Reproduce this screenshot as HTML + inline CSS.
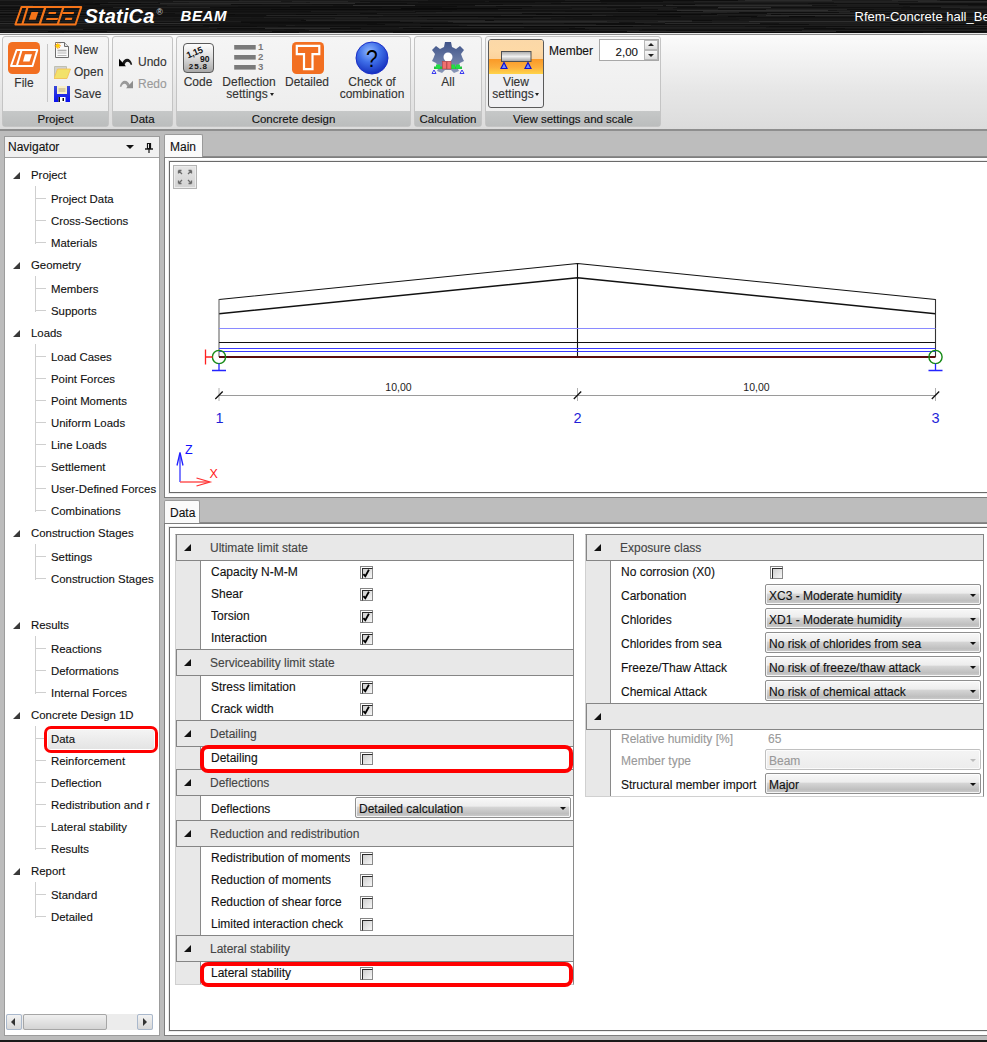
<!DOCTYPE html>
<html><head><meta charset="utf-8">
<style>
*{margin:0;padding:0;box-sizing:border-box}
html,body{width:987px;height:1042px;overflow:hidden;background:#bcbcbc;font-family:"Liberation Sans",sans-serif;font-size:11px;color:#111}
.ni,.row,.ct,.combo,.tab,.t,.lbl,.gfoot{-webkit-text-stroke:0.12px currentColor}
.a{position:absolute}
.t{position:absolute;white-space:nowrap;line-height:14px}
#title{left:0;top:0;width:987px;height:34px;background:#0b0b0b}
#ribbon{left:0;top:34px;width:987px;height:97px;background:linear-gradient(#fbfbfb,#e6e6e6 60%,#dcdcdc);border-top:1px solid #9a9a9a;border-bottom:2px solid #8e8e8e}
.grp{position:absolute;top:36px;height:91px;border:1px solid #c4c4c4;border-radius:3px;background:linear-gradient(#f5f5f5,#ececec)}
.gfoot{position:absolute;left:0;right:0;bottom:0;height:15px;background:linear-gradient(#c6c8c8,#bbbdbd);text-align:center;line-height:16px;font-size:11.5px;color:#111}
.lbl{position:absolute;text-align:center;white-space:nowrap;line-height:15px;color:#333;font-size:11.5px}
#nav{left:4px;top:136px;width:156px;height:900px;background:#fff;border:1px solid #9c9c9c}
#navh{left:0;top:0;width:154px;height:21px;background:#f0f0f0;border-bottom:1px solid #a0a0a0}
.ni{position:absolute;white-space:nowrap;font-size:11.4px;line-height:14px;color:#111}
.panel{position:absolute;background:#fff;border:1px solid #7e7e7e}
.frame{position:absolute;border:1px solid #6a6a6a;background:#fff;border-right:none;box-shadow:0 0 0 1px #ececec}
.tab{position:absolute;background:#fafafa;border:1px solid #9a9a9a;border-bottom:none;border-radius:2px 2px 0 0;font-size:11.5px;line-height:20px;padding-left:5px}
.tabstrip{position:absolute;background:#bdbdbd;border-bottom:1px solid #8a8a8a}
.pg{position:absolute;border:1px solid;border-color:#8a8a8a #8a8a8a #d0d0d0 #d0d0d0;background:#fff}
.cat{position:absolute;height:27px;background:#e8e8e8;border:1px solid #858585}
.cat .tri{position:absolute;left:7px;top:9px;width:0;height:0;border-left:7px solid transparent;border-bottom:7px solid #111}
.cat .ct{position:absolute;left:33px;top:6px;color:#444;font-size:12px;line-height:14px;white-space:nowrap}
.gut{position:absolute;left:0;width:24px;background:#e8e8e8;border-right:1px solid #8a8a8a;border-left:1px solid #d0d0d0}
.row{position:absolute;left:35px;white-space:nowrap;font-size:12px;line-height:14px;overflow:hidden;width:139px}
.cb{position:absolute;width:13px;height:13px;border:1px solid #858585;background:#fff}
.cb::after{content:"";position:absolute;left:1px;top:1px;width:9px;height:9px;border:1px solid;border-color:#2a2a2a #8a8a8a #8a8a8a #2a2a2a;background:linear-gradient(135deg,#cfcfcf,#f6f6f6)}
.combo{position:absolute;height:21px;border:1px solid #8f8f8f;border-radius:2px;background:linear-gradient(#f8f8f8,#ededed 42%,#d4d4d4 50%,#bfbfbf 82%,#c6c6c6 92%,#e2e2e2);box-shadow:inset 0 0 0 1px rgba(255,255,255,0.75);font-size:12px;line-height:23px;padding-left:3px;white-space:nowrap;overflow:hidden}
.combo::after{content:"";position:absolute;right:4px;top:9px;border-left:3px solid transparent;border-right:3px solid transparent;border-top:3px solid #111}
.hl{position:absolute;border:3px solid #ff0000;border-radius:7px}
.ntri{left:13px;width:0;height:0;border-left:7px solid transparent;border-bottom:7px solid #3a3a3a}
.dis{color:#999;background:linear-gradient(#f4f4f4,#ececec)!important;border-color:#c0c0c0!important}
.dis::after{border-top-color:#bbb!important}
.dtxt{color:#9a9a9a}
</style></head><body>

<!-- TITLE BAR -->
<div id="title" class="a"></div>

<!-- RIBBON -->
<div id="ribbon" class="a"></div>

<div class="grp" style="left:2px;width:107px"><div class="gfoot">Project</div></div>
<div class="grp" style="left:112px;width:61px"><div class="gfoot">Data</div></div>
<div class="grp" style="left:176px;width:235px"><div class="gfoot">Concrete design</div></div>
<div class="grp" style="left:414px;width:68px"><div class="gfoot">Calculation</div></div>
<div class="grp" style="left:485px;width:176px"><div class="gfoot">View settings and scale</div></div>
<!-- title content -->
<svg class="a" style="left:0;top:0" width="987" height="33">
  <defs>
    <g id="streakg"></g>
  </defs>
  <rect width="987" height="33" fill="#111"/>
<rect y="0" width="987" height="1" fill="rgb(28,28,28)"/>
<rect x="0" y="0" width="68" height="1" fill="rgb(33,33,33)" opacity="0.69"/>
<rect x="72" y="0" width="167" height="1" fill="rgb(14,14,14)" opacity="0.52"/>
<rect x="242" y="0" width="159" height="1" fill="rgb(21,21,21)" opacity="0.32"/>
<rect x="428" y="0" width="137" height="1" fill="rgb(12,12,12)" opacity="0.44"/>
<rect x="600" y="0" width="138" height="1" fill="rgb(11,11,11)" opacity="0.80"/>
<rect x="745" y="0" width="87" height="1" fill="rgb(48,48,48)" opacity="0.68"/>
<rect x="892" y="0" width="45" height="1" fill="rgb(44,44,44)" opacity="0.65"/>
<rect x="940" y="0" width="86" height="1" fill="rgb(10,10,10)" opacity="0.63"/>
<rect y="1" width="987" height="1" fill="rgb(24,24,24)"/>
<rect x="0" y="1" width="137" height="1" fill="rgb(17,17,17)" opacity="0.62"/>
<rect x="173" y="1" width="108" height="1" fill="rgb(43,43,43)" opacity="0.79"/>
<rect x="292" y="1" width="56" height="1" fill="rgb(45,45,45)" opacity="0.64"/>
<rect x="360" y="1" width="125" height="1" fill="rgb(14,14,14)" opacity="0.63"/>
<rect x="489" y="1" width="174" height="1" fill="rgb(11,11,11)" opacity="0.67"/>
<rect x="694" y="1" width="204" height="1" fill="rgb(42,42,42)" opacity="0.56"/>
<rect x="918" y="1" width="149" height="1" fill="rgb(45,45,45)" opacity="0.85"/>
<rect y="2" width="987" height="1" fill="rgb(24,24,24)"/>
<rect x="0" y="2" width="93" height="1" fill="rgb(19,19,19)" opacity="0.72"/>
<rect x="108" y="2" width="50" height="1" fill="rgb(44,44,44)" opacity="0.48"/>
<rect x="189" y="2" width="117" height="1" fill="rgb(36,36,36)" opacity="0.47"/>
<rect x="310" y="2" width="60" height="1" fill="rgb(40,40,40)" opacity="0.55"/>
<rect x="418" y="2" width="117" height="1" fill="rgb(17,17,17)" opacity="0.86"/>
<rect x="561" y="2" width="40" height="1" fill="rgb(50,50,50)" opacity="0.35"/>
<rect x="636" y="2" width="176" height="1" fill="rgb(28,28,28)" opacity="0.50"/>
<rect x="834" y="2" width="182" height="1" fill="rgb(39,39,39)" opacity="0.65"/>
<rect y="3" width="987" height="1" fill="rgb(16,16,16)"/>
<rect x="0" y="3" width="53" height="1" fill="rgb(25,25,25)" opacity="0.58"/>
<rect x="95" y="3" width="46" height="1" fill="rgb(11,11,11)" opacity="0.74"/>
<rect x="160" y="3" width="195" height="1" fill="rgb(44,44,44)" opacity="0.90"/>
<rect x="407" y="3" width="144" height="1" fill="rgb(26,26,26)" opacity="0.73"/>
<rect x="607" y="3" width="201" height="1" fill="rgb(30,30,30)" opacity="0.31"/>
<rect x="837" y="3" width="120" height="1" fill="rgb(18,18,18)" opacity="0.67"/>
<rect y="4" width="987" height="1" fill="rgb(14,14,14)"/>
<rect x="0" y="4" width="85" height="1" fill="rgb(26,26,26)" opacity="0.38"/>
<rect x="100" y="4" width="131" height="1" fill="rgb(33,33,33)" opacity="0.85"/>
<rect x="262" y="4" width="50" height="1" fill="rgb(18,18,18)" opacity="0.57"/>
<rect x="347" y="4" width="101" height="1" fill="rgb(16,16,16)" opacity="0.79"/>
<rect x="503" y="4" width="170" height="1" fill="rgb(25,25,25)" opacity="0.72"/>
<rect x="695" y="4" width="204" height="1" fill="rgb(32,32,32)" opacity="0.87"/>
<rect x="908" y="4" width="51" height="1" fill="rgb(19,19,19)" opacity="0.39"/>
<rect y="5" width="987" height="1" fill="rgb(20,20,20)"/>
<rect x="0" y="5" width="33" height="1" fill="rgb(39,39,39)" opacity="0.80"/>
<rect x="44" y="5" width="97" height="1" fill="rgb(26,26,26)" opacity="0.30"/>
<rect x="167" y="5" width="166" height="1" fill="rgb(31,31,31)" opacity="0.67"/>
<rect x="353" y="5" width="62" height="1" fill="rgb(52,52,52)" opacity="0.82"/>
<rect x="475" y="5" width="188" height="1" fill="rgb(49,49,49)" opacity="0.71"/>
<rect x="666" y="5" width="146" height="1" fill="rgb(51,51,51)" opacity="0.78"/>
<rect x="837" y="5" width="131" height="1" fill="rgb(33,33,33)" opacity="0.54"/>
<rect y="6" width="987" height="1" fill="rgb(22,22,22)"/>
<rect x="0" y="6" width="45" height="1" fill="rgb(20,20,20)" opacity="0.34"/>
<rect x="58" y="6" width="142" height="1" fill="rgb(18,18,18)" opacity="0.37"/>
<rect x="238" y="6" width="43" height="1" fill="rgb(14,14,14)" opacity="0.30"/>
<rect x="290" y="6" width="167" height="1" fill="rgb(14,14,14)" opacity="0.87"/>
<rect x="496" y="6" width="36" height="1" fill="rgb(12,12,12)" opacity="0.82"/>
<rect x="571" y="6" width="126" height="1" fill="rgb(17,17,17)" opacity="0.68"/>
<rect x="719" y="6" width="184" height="1" fill="rgb(31,31,31)" opacity="0.58"/>
<rect x="910" y="6" width="154" height="1" fill="rgb(37,37,37)" opacity="0.59"/>
<rect y="7" width="987" height="1" fill="rgb(16,16,16)"/>
<rect x="0" y="7" width="66" height="1" fill="rgb(14,14,14)" opacity="0.75"/>
<rect x="113" y="7" width="97" height="1" fill="rgb(38,38,38)" opacity="0.80"/>
<rect x="220" y="7" width="162" height="1" fill="rgb(9,9,9)" opacity="0.42"/>
<rect x="442" y="7" width="165" height="1" fill="rgb(31,31,31)" opacity="0.39"/>
<rect x="641" y="7" width="36" height="1" fill="rgb(41,41,41)" opacity="0.48"/>
<rect x="718" y="7" width="53" height="1" fill="rgb(52,52,52)" opacity="0.81"/>
<rect x="804" y="7" width="123" height="1" fill="rgb(18,18,18)" opacity="0.51"/>
<rect x="941" y="7" width="166" height="1" fill="rgb(42,42,42)" opacity="0.77"/>
<rect y="8" width="987" height="1" fill="rgb(20,20,20)"/>
<rect x="0" y="8" width="186" height="1" fill="rgb(20,20,20)" opacity="0.78"/>
<rect x="238" y="8" width="132" height="1" fill="rgb(22,22,22)" opacity="0.42"/>
<rect x="401" y="8" width="121" height="1" fill="rgb(9,9,9)" opacity="0.89"/>
<rect x="572" y="8" width="101" height="1" fill="rgb(38,38,38)" opacity="0.46"/>
<rect x="717" y="8" width="184" height="1" fill="rgb(30,30,30)" opacity="0.57"/>
<rect x="960" y="8" width="215" height="1" fill="rgb(30,30,30)" opacity="0.87"/>
<rect y="9" width="987" height="1" fill="rgb(16,16,16)"/>
<rect x="0" y="9" width="86" height="1" fill="rgb(14,14,14)" opacity="0.44"/>
<rect x="98" y="9" width="116" height="1" fill="rgb(21,21,21)" opacity="0.59"/>
<rect x="271" y="9" width="186" height="1" fill="rgb(8,8,8)" opacity="0.59"/>
<rect x="498" y="9" width="118" height="1" fill="rgb(49,49,49)" opacity="0.35"/>
<rect x="658" y="9" width="60" height="1" fill="rgb(32,32,32)" opacity="0.77"/>
<rect x="766" y="9" width="81" height="1" fill="rgb(38,38,38)" opacity="0.83"/>
<rect x="874" y="9" width="192" height="1" fill="rgb(29,29,29)" opacity="0.35"/>
<rect y="10" width="987" height="1" fill="rgb(22,22,22)"/>
<rect x="0" y="10" width="148" height="1" fill="rgb(33,33,33)" opacity="0.75"/>
<rect x="153" y="10" width="215" height="1" fill="rgb(18,18,18)" opacity="0.40"/>
<rect x="376" y="10" width="37" height="1" fill="rgb(17,17,17)" opacity="0.65"/>
<rect x="442" y="10" width="197" height="1" fill="rgb(17,17,17)" opacity="0.67"/>
<rect x="677" y="10" width="151" height="1" fill="rgb(50,50,50)" opacity="0.86"/>
<rect x="837" y="10" width="170" height="1" fill="rgb(43,43,43)" opacity="0.38"/>
<rect y="11" width="987" height="1" fill="rgb(16,16,16)"/>
<rect x="0" y="11" width="164" height="1" fill="rgb(16,16,16)" opacity="0.56"/>
<rect x="219" y="11" width="79" height="1" fill="rgb(21,21,21)" opacity="0.32"/>
<rect x="311" y="11" width="104" height="1" fill="rgb(40,40,40)" opacity="0.44"/>
<rect x="452" y="11" width="113" height="1" fill="rgb(24,24,24)" opacity="0.63"/>
<rect x="618" y="11" width="63" height="1" fill="rgb(11,11,11)" opacity="0.85"/>
<rect x="703" y="11" width="147" height="1" fill="rgb(50,50,50)" opacity="0.65"/>
<rect x="907" y="11" width="162" height="1" fill="rgb(34,34,34)" opacity="0.80"/>
<rect y="12" width="987" height="1" fill="rgb(30,30,30)"/>
<rect x="0" y="12" width="63" height="1" fill="rgb(42,42,42)" opacity="0.39"/>
<rect x="95" y="12" width="34" height="1" fill="rgb(36,36,36)" opacity="0.77"/>
<rect x="167" y="12" width="31" height="1" fill="rgb(17,17,17)" opacity="0.40"/>
<rect x="228" y="12" width="188" height="1" fill="rgb(15,15,15)" opacity="0.63"/>
<rect x="436" y="12" width="204" height="1" fill="rgb(41,41,41)" opacity="0.62"/>
<rect x="670" y="12" width="57" height="1" fill="rgb(43,43,43)" opacity="0.33"/>
<rect x="739" y="12" width="100" height="1" fill="rgb(10,10,10)" opacity="0.76"/>
<rect x="871" y="12" width="145" height="1" fill="rgb(43,43,43)" opacity="0.32"/>
<rect y="13" width="987" height="1" fill="rgb(16,16,16)"/>
<rect x="0" y="13" width="143" height="1" fill="rgb(28,28,28)" opacity="0.67"/>
<rect x="175" y="13" width="185" height="1" fill="rgb(40,40,40)" opacity="0.42"/>
<rect x="377" y="13" width="145" height="1" fill="rgb(40,40,40)" opacity="0.62"/>
<rect x="552" y="13" width="159" height="1" fill="rgb(23,23,23)" opacity="0.72"/>
<rect x="767" y="13" width="96" height="1" fill="rgb(43,43,43)" opacity="0.84"/>
<rect x="875" y="13" width="144" height="1" fill="rgb(16,16,16)" opacity="0.55"/>
<rect y="14" width="987" height="1" fill="rgb(12,12,12)"/>
<rect x="0" y="14" width="110" height="1" fill="rgb(12,12,12)" opacity="0.70"/>
<rect x="137" y="14" width="48" height="1" fill="rgb(21,21,21)" opacity="0.70"/>
<rect x="235" y="14" width="61" height="1" fill="rgb(17,17,17)" opacity="0.86"/>
<rect x="337" y="14" width="199" height="1" fill="rgb(31,31,31)" opacity="0.39"/>
<rect x="592" y="14" width="65" height="1" fill="rgb(37,37,37)" opacity="0.43"/>
<rect x="717" y="14" width="54" height="1" fill="rgb(33,33,33)" opacity="0.83"/>
<rect x="781" y="14" width="200" height="1" fill="rgb(22,22,22)" opacity="0.40"/>
<rect y="15" width="987" height="1" fill="rgb(30,30,30)"/>
<rect x="0" y="15" width="133" height="1" fill="rgb(29,29,29)" opacity="0.55"/>
<rect x="155" y="15" width="111" height="1" fill="rgb(13,13,13)" opacity="0.73"/>
<rect x="267" y="15" width="116" height="1" fill="rgb(43,43,43)" opacity="0.58"/>
<rect x="428" y="15" width="34" height="1" fill="rgb(32,32,32)" opacity="0.50"/>
<rect x="501" y="15" width="105" height="1" fill="rgb(40,40,40)" opacity="0.88"/>
<rect x="613" y="15" width="88" height="1" fill="rgb(14,14,14)" opacity="0.35"/>
<rect x="718" y="15" width="40" height="1" fill="rgb(19,19,19)" opacity="0.46"/>
<rect x="766" y="15" width="138" height="1" fill="rgb(51,51,51)" opacity="0.79"/>
<rect x="920" y="15" width="133" height="1" fill="rgb(17,17,17)" opacity="0.62"/>
<rect y="16" width="987" height="1" fill="rgb(12,12,12)"/>
<rect x="0" y="16" width="209" height="1" fill="rgb(28,28,28)" opacity="0.35"/>
<rect x="212" y="16" width="206" height="1" fill="rgb(19,19,19)" opacity="0.56"/>
<rect x="422" y="16" width="98" height="1" fill="rgb(9,9,9)" opacity="0.68"/>
<rect x="571" y="16" width="96" height="1" fill="rgb(13,13,13)" opacity="0.66"/>
<rect x="681" y="16" width="47" height="1" fill="rgb(24,24,24)" opacity="0.82"/>
<rect x="757" y="16" width="32" height="1" fill="rgb(29,29,29)" opacity="0.90"/>
<rect x="815" y="16" width="98" height="1" fill="rgb(47,47,47)" opacity="0.38"/>
<rect x="946" y="16" width="211" height="1" fill="rgb(23,23,23)" opacity="0.86"/>
<rect y="17" width="987" height="1" fill="rgb(24,24,24)"/>
<rect x="0" y="17" width="42" height="1" fill="rgb(19,19,19)" opacity="0.42"/>
<rect x="61" y="17" width="190" height="1" fill="rgb(27,27,27)" opacity="0.62"/>
<rect x="264" y="17" width="104" height="1" fill="rgb(36,36,36)" opacity="0.60"/>
<rect x="379" y="17" width="99" height="1" fill="rgb(30,30,30)" opacity="0.78"/>
<rect x="494" y="17" width="39" height="1" fill="rgb(8,8,8)" opacity="0.31"/>
<rect x="565" y="17" width="171" height="1" fill="rgb(20,20,20)" opacity="0.61"/>
<rect x="751" y="17" width="144" height="1" fill="rgb(14,14,14)" opacity="0.69"/>
<rect x="936" y="17" width="140" height="1" fill="rgb(50,50,50)" opacity="0.60"/>
<rect y="18" width="987" height="1" fill="rgb(22,22,22)"/>
<rect x="0" y="18" width="159" height="1" fill="rgb(27,27,27)" opacity="0.71"/>
<rect x="173" y="18" width="117" height="1" fill="rgb(20,20,20)" opacity="0.80"/>
<rect x="335" y="18" width="216" height="1" fill="rgb(48,48,48)" opacity="0.38"/>
<rect x="573" y="18" width="43" height="1" fill="rgb(16,16,16)" opacity="0.31"/>
<rect x="656" y="18" width="219" height="1" fill="rgb(24,24,24)" opacity="0.56"/>
<rect x="878" y="18" width="51" height="1" fill="rgb(50,50,50)" opacity="0.80"/>
<rect x="984" y="18" width="159" height="1" fill="rgb(50,50,50)" opacity="0.88"/>
<rect y="19" width="987" height="1" fill="rgb(20,20,20)"/>
<rect x="0" y="19" width="207" height="1" fill="rgb(26,26,26)" opacity="0.33"/>
<rect x="218" y="19" width="70" height="1" fill="rgb(25,25,25)" opacity="0.57"/>
<rect x="304" y="19" width="123" height="1" fill="rgb(29,29,29)" opacity="0.88"/>
<rect x="462" y="19" width="112" height="1" fill="rgb(23,23,23)" opacity="0.32"/>
<rect x="630" y="19" width="109" height="1" fill="rgb(21,21,21)" opacity="0.51"/>
<rect x="739" y="19" width="115" height="1" fill="rgb(32,32,32)" opacity="0.35"/>
<rect x="871" y="19" width="158" height="1" fill="rgb(49,49,49)" opacity="0.42"/>
<rect y="20" width="987" height="1" fill="rgb(14,14,14)"/>
<rect x="0" y="20" width="53" height="1" fill="rgb(24,24,24)" opacity="0.79"/>
<rect x="62" y="20" width="132" height="1" fill="rgb(45,45,45)" opacity="0.33"/>
<rect x="195" y="20" width="106" height="1" fill="rgb(27,27,27)" opacity="0.68"/>
<rect x="306" y="20" width="179" height="1" fill="rgb(41,41,41)" opacity="0.81"/>
<rect x="494" y="20" width="198" height="1" fill="rgb(46,46,46)" opacity="0.53"/>
<rect x="712" y="20" width="214" height="1" fill="rgb(39,39,39)" opacity="0.39"/>
<rect x="972" y="20" width="188" height="1" fill="rgb(49,49,49)" opacity="0.39"/>
<rect y="21" width="987" height="1" fill="rgb(30,30,30)"/>
<rect x="0" y="21" width="190" height="1" fill="rgb(35,35,35)" opacity="0.74"/>
<rect x="241" y="21" width="159" height="1" fill="rgb(16,16,16)" opacity="0.85"/>
<rect x="448" y="21" width="159" height="1" fill="rgb(44,44,44)" opacity="0.80"/>
<rect x="658" y="21" width="34" height="1" fill="rgb(51,51,51)" opacity="0.65"/>
<rect x="749" y="21" width="212" height="1" fill="rgb(51,51,51)" opacity="0.87"/>
<rect y="22" width="987" height="1" fill="rgb(20,20,20)"/>
<rect x="0" y="22" width="51" height="1" fill="rgb(9,9,9)" opacity="0.33"/>
<rect x="91" y="22" width="122" height="1" fill="rgb(14,14,14)" opacity="0.53"/>
<rect x="241" y="22" width="172" height="1" fill="rgb(11,11,11)" opacity="0.68"/>
<rect x="453" y="22" width="166" height="1" fill="rgb(51,51,51)" opacity="0.45"/>
<rect x="635" y="22" width="30" height="1" fill="rgb(37,37,37)" opacity="0.78"/>
<rect x="712" y="22" width="158" height="1" fill="rgb(42,42,42)" opacity="0.36"/>
<rect x="903" y="22" width="46" height="1" fill="rgb(38,38,38)" opacity="0.45"/>
<rect x="953" y="22" width="97" height="1" fill="rgb(23,23,23)" opacity="0.74"/>
<rect y="23" width="987" height="1" fill="rgb(20,20,20)"/>
<rect x="0" y="23" width="219" height="1" fill="rgb(49,49,49)" opacity="0.89"/>
<rect x="250" y="23" width="127" height="1" fill="rgb(12,12,12)" opacity="0.59"/>
<rect x="420" y="23" width="103" height="1" fill="rgb(10,10,10)" opacity="0.67"/>
<rect x="564" y="23" width="80" height="1" fill="rgb(12,12,12)" opacity="0.66"/>
<rect x="665" y="23" width="95" height="1" fill="rgb(49,49,49)" opacity="0.75"/>
<rect x="779" y="23" width="189" height="1" fill="rgb(44,44,44)" opacity="0.38"/>
<rect y="24" width="987" height="1" fill="rgb(14,14,14)"/>
<rect x="0" y="24" width="154" height="1" fill="rgb(25,25,25)" opacity="0.88"/>
<rect x="160" y="24" width="207" height="1" fill="rgb(21,21,21)" opacity="0.71"/>
<rect x="385" y="24" width="211" height="1" fill="rgb(41,41,41)" opacity="0.47"/>
<rect x="625" y="24" width="149" height="1" fill="rgb(15,15,15)" opacity="0.90"/>
<rect x="809" y="24" width="81" height="1" fill="rgb(27,27,27)" opacity="0.89"/>
<rect x="949" y="24" width="151" height="1" fill="rgb(9,9,9)" opacity="0.47"/>
<rect y="25" width="987" height="1" fill="rgb(30,30,30)"/>
<rect x="0" y="25" width="145" height="1" fill="rgb(25,25,25)" opacity="0.53"/>
<rect x="203" y="25" width="83" height="1" fill="rgb(12,12,12)" opacity="0.65"/>
<rect x="295" y="25" width="164" height="1" fill="rgb(24,24,24)" opacity="0.87"/>
<rect x="467" y="25" width="184" height="1" fill="rgb(48,48,48)" opacity="0.61"/>
<rect x="707" y="25" width="58" height="1" fill="rgb(31,31,31)" opacity="0.44"/>
<rect x="822" y="25" width="154" height="1" fill="rgb(33,33,33)" opacity="0.31"/>
<rect x="976" y="25" width="155" height="1" fill="rgb(51,51,51)" opacity="0.57"/>
<rect y="26" width="987" height="1" fill="rgb(18,18,18)"/>
<rect x="0" y="26" width="136" height="1" fill="rgb(30,30,30)" opacity="0.53"/>
<rect x="143" y="26" width="114" height="1" fill="rgb(8,8,8)" opacity="0.49"/>
<rect x="278" y="26" width="131" height="1" fill="rgb(15,15,15)" opacity="0.86"/>
<rect x="421" y="26" width="212" height="1" fill="rgb(8,8,8)" opacity="0.84"/>
<rect x="651" y="26" width="94" height="1" fill="rgb(31,31,31)" opacity="0.34"/>
<rect x="769" y="26" width="180" height="1" fill="rgb(12,12,12)" opacity="0.52"/>
<rect x="976" y="26" width="100" height="1" fill="rgb(11,11,11)" opacity="0.47"/>
<rect y="27" width="987" height="1" fill="rgb(24,24,24)"/>
<rect x="0" y="27" width="192" height="1" fill="rgb(17,17,17)" opacity="0.45"/>
<rect x="209" y="27" width="141" height="1" fill="rgb(40,40,40)" opacity="0.49"/>
<rect x="399" y="27" width="125" height="1" fill="rgb(35,35,35)" opacity="0.83"/>
<rect x="575" y="27" width="191" height="1" fill="rgb(33,33,33)" opacity="0.85"/>
<rect x="826" y="27" width="171" height="1" fill="rgb(43,43,43)" opacity="0.42"/>
<rect y="28" width="987" height="1" fill="rgb(14,14,14)"/>
<rect x="0" y="28" width="217" height="1" fill="rgb(34,34,34)" opacity="0.57"/>
<rect x="265" y="28" width="65" height="1" fill="rgb(49,49,49)" opacity="0.82"/>
<rect x="361" y="28" width="42" height="1" fill="rgb(43,43,43)" opacity="0.38"/>
<rect x="433" y="28" width="136" height="1" fill="rgb(29,29,29)" opacity="0.47"/>
<rect x="585" y="28" width="219" height="1" fill="rgb(49,49,49)" opacity="0.46"/>
<rect x="845" y="28" width="91" height="1" fill="rgb(27,27,27)" opacity="0.59"/>
<rect x="978" y="28" width="130" height="1" fill="rgb(15,15,15)" opacity="0.40"/>
<rect y="29" width="987" height="1" fill="rgb(16,16,16)"/>
<rect x="0" y="29" width="83" height="1" fill="rgb(40,40,40)" opacity="0.84"/>
<rect x="114" y="29" width="170" height="1" fill="rgb(22,22,22)" opacity="0.57"/>
<rect x="305" y="29" width="145" height="1" fill="rgb(35,35,35)" opacity="0.38"/>
<rect x="462" y="29" width="92" height="1" fill="rgb(13,13,13)" opacity="0.40"/>
<rect x="589" y="29" width="53" height="1" fill="rgb(28,28,28)" opacity="0.44"/>
<rect x="658" y="29" width="175" height="1" fill="rgb(20,20,20)" opacity="0.83"/>
<rect x="880" y="29" width="135" height="1" fill="rgb(32,32,32)" opacity="0.55"/>
<rect y="30" width="987" height="1" fill="rgb(20,20,20)"/>
<rect x="0" y="30" width="126" height="1" fill="rgb(25,25,25)" opacity="0.50"/>
<rect x="129" y="30" width="157" height="1" fill="rgb(25,25,25)" opacity="0.64"/>
<rect x="309" y="30" width="62" height="1" fill="rgb(51,51,51)" opacity="0.60"/>
<rect x="411" y="30" width="85" height="1" fill="rgb(13,13,13)" opacity="0.46"/>
<rect x="511" y="30" width="128" height="1" fill="rgb(33,33,33)" opacity="0.69"/>
<rect x="666" y="30" width="109" height="1" fill="rgb(9,9,9)" opacity="0.38"/>
<rect x="802" y="30" width="211" height="1" fill="rgb(38,38,38)" opacity="0.88"/>
<rect y="31" width="987" height="1" fill="rgb(14,14,14)"/>
<rect x="0" y="31" width="48" height="1" fill="rgb(33,33,33)" opacity="0.86"/>
<rect x="107" y="31" width="165" height="1" fill="rgb(37,37,37)" opacity="0.88"/>
<rect x="287" y="31" width="57" height="1" fill="rgb(22,22,22)" opacity="0.39"/>
<rect x="377" y="31" width="204" height="1" fill="rgb(14,14,14)" opacity="0.86"/>
<rect x="627" y="31" width="209" height="1" fill="rgb(49,49,49)" opacity="0.81"/>
<rect x="893" y="31" width="147" height="1" fill="rgb(13,13,13)" opacity="0.63"/>
<rect y="32" width="987" height="1" fill="rgb(14,14,14)"/>
<rect x="0" y="32" width="62" height="1" fill="rgb(22,22,22)" opacity="0.64"/>
<rect x="64" y="32" width="195" height="1" fill="rgb(27,27,27)" opacity="0.88"/>
<rect x="299" y="32" width="94" height="1" fill="rgb(41,41,41)" opacity="0.68"/>
<rect x="437" y="32" width="58" height="1" fill="rgb(14,14,14)" opacity="0.34"/>
<rect x="528" y="32" width="179" height="1" fill="rgb(20,20,20)" opacity="0.53"/>
<rect x="721" y="32" width="183" height="1" fill="rgb(8,8,8)" opacity="0.31"/>
<rect x="923" y="32" width="147" height="1" fill="rgb(25,25,25)" opacity="0.88"/>
  <g fill="#f57418">
    <path d="M21.5,7.1 L81.2,7.1 L75.5,24.5 L15.4,24.5 Z" fill="none" stroke="#f57418" stroke-width="2" stroke-linejoin="round"/>
    <path d="M26.5,7 L28.7,7 L23.4,24.5 L21.2,24.5 Z"/>
    <path d="M44.2,7 L46.6,7 L40.8,24.5 L38.4,24.5 Z"/>
    <path d="M62.3,7 L64.6,7 L58.8,24.5 L56.5,24.5 Z"/>
    <path d="M31.5,11.9 L38.3,11.9 L35.7,19.8 L28.8,19.8 Z"/>
    <path d="M48.9,11.9 L56.3,11.9 L55.7,13.9 L48.3,13.9 Z"/>
    <path d="M46.6,18 L58.2,18 L57.6,20 L46,20 Z"/>
    <path d="M62.8,11.9 L74.2,11.9 L73.6,13.9 L62.2,13.9 Z"/>
    <path d="M65.5,17.7 L72.4,17.7 L71.7,20 L64.8,20 Z"/>
  </g>
  <text x="84.5" y="22.7" fill="#fff" font-family="Liberation Sans" font-weight="bold" font-style="italic" font-size="20" letter-spacing="0.15">StatiCa</text>
  <text x="156.5" y="14.8" fill="#ddd" font-family="Liberation Sans" font-size="8.5">®</text>
  <text x="180.5" y="21.4" fill="#fff" font-family="Liberation Sans" font-weight="bold" font-style="italic" font-size="15" letter-spacing="0.6">BEAM</text>
  <text x="854.5" y="20.5" fill="#fff" font-family="Liberation Sans" font-size="13">Rfem-Concrete hall_Be</text>
</svg>
<div class="a" style="left:0;top:33px;width:987px;height:1px;background:#e6e6e6"></div>
<div class="a" style="left:0;top:34px;width:987px;height:1px;background:#8c8c8c"></div>

<!-- Project group -->
<svg class="a" style="left:8px;top:42px" width="32" height="32">
  <rect width="32" height="32" rx="4.5" fill="#f26f21"/>
  <path d="M8.6,8 L29.3,8 L24.5,24 L3,24 Z" fill="none" stroke="#fff" stroke-width="2" stroke-linejoin="round"/>
  <path d="M13.6,8 L8.8,24" stroke="#fff" stroke-width="2"/>
  <path d="M17,12.2 L24,12.2 L21.5,19.5 L15,19.5Z" fill="#fff"/>
</svg>
<div class="lbl" style="left:8px;top:76px;width:32px;font-size:12px">File</div>
<div class="a" style="left:47px;top:44px;width:1px;height:58px;background:#c6c6c6"></div>
<!-- new icon -->
<svg class="a" style="left:54px;top:41px" width="17" height="18">
  <path d="M1.5,1.5 L10.5,1.5 L14.5,5.5 L14.5,16.5 L1.5,16.5 Z" fill="#fafafa" stroke="#6e6e6e"/>
  <path d="M10.5,1.5 L10.5,5.5 L14.5,5.5" fill="#e4e4e4" stroke="#6e6e6e"/>
  <path d="M3.5,9.5 H12.5" stroke="#b0b0b0" stroke-width="1.6"/>
  <path d="M3.5,12 H12.5 M3.5,14.5 H12.5" stroke="#b8b8b8"/>
  <path d="M3.8,1.5 V8 M0.5,4.8 H7 M1.5,2.5 L6,7 M6,2.5 L1.5,7" stroke="#ff9a30" stroke-width="1"/>
  <circle cx="3.8" cy="4.8" r="1.9" fill="#ffd400"/>
</svg>
<div class="t" style="left:74px;top:43px;font-size:12px;color:#333">New</div>
<!-- open icon -->
<svg class="a" style="left:54px;top:66px" width="17" height="13">
  <path d="M0.5,0.5 H12.5 V12.5 H0.5Z" fill="#d0d0d0" stroke="#c0c0b0"/>
  <path d="M3.5,3 H16.5 L13,12.5 H0 Z" fill="#f2e26a" stroke="#f8c050" stroke-width="0.8"/>
</svg>
<div class="t" style="left:74px;top:65px;font-size:12px;color:#333">Open</div>
<!-- save icon -->
<svg class="a" style="left:54px;top:86px" width="16" height="16">
  <defs><linearGradient id="fl" x1="0" y1="0" x2="0" y2="1"><stop offset="0" stop-color="#3a48d8"/><stop offset="1" stop-color="#0a10f0"/></linearGradient></defs>
  <rect x="0" y="0" width="16" height="16" fill="url(#fl)"/>
  <rect x="3" y="0" width="10" height="8" fill="#f8f0c8"/>
  <path d="M4.5,3 H11.5 M4.5,5 H11.5" stroke="#b8a878"/>
  <rect x="4.5" y="11" width="7" height="5" fill="#fff"/>
  <rect x="4.5" y="11" width="1.5" height="5" fill="#111"/>
  <rect x="8.5" y="12" width="1.5" height="3" fill="#111"/>
</svg>
<div class="t" style="left:74px;top:87px;font-size:12px;color:#333">Save</div>

<!-- Data group -->
<svg class="a" style="left:118px;top:56px" width="16" height="11">
  <path d="M4,7.5 C6,1.5 12.5,0.5 14.2,8.6 L12.8,8.9 C11,4.5 7.5,5 6.8,9 Z" fill="#1a1a1a"/>
  <path d="M1,2.7 L1,10.2 L8,10.2 Z" fill="#000"/>
</svg>
<div class="t" style="left:138px;top:55px;font-size:12px;color:#333">Undo</div>
<svg class="a" style="left:118px;top:78px" width="16" height="11">
  <g transform="translate(16,0) scale(-1,1)">
  <path d="M4,7.5 C6,1.5 12.5,0.5 14.2,8.6 L12.8,8.9 C11,4.5 7.5,5 6.8,9 Z" fill="#9a9a9a"/>
  <path d="M1,2.7 L1,10.2 L8,10.2 Z" fill="#8e8e8e"/>
  </g>
</svg>
<div class="t" style="left:138px;top:77px;font-size:12px;color:#9a9a9a">Redo</div>

<!-- Concrete design group -->
<div class="a" style="left:183px;top:43px;width:31px;height:30px;border:1.5px solid #5a5a5a;border-radius:4px;background:linear-gradient(#fdfdfd,#e0e0e0 45%,#a8a8a8)"></div>
<svg class="a" style="left:183px;top:43px" width="31" height="30" font-family="Liberation Sans" font-weight="700" fill="#111">
  <text x="5" y="15.5" font-size="9" transform="rotate(-22 5 15.5)" letter-spacing="-0.2">1,15</text>
  <text x="17" y="19.2" font-size="8.6">90</text>
  <text x="5.8" y="25.8" font-size="8" letter-spacing="0.9">25.8</text>
</svg>
<div class="lbl" style="left:178px;top:75px;width:40px;font-size:12px">Code</div>

<svg class="a" style="left:233px;top:42px" width="34" height="30" font-family="Liberation Sans" font-weight="700" fill="#7a7a7a">
  <rect x="1.2" y="3" width="21.5" height="4.6"/>
  <rect x="1.2" y="13" width="21.5" height="4.6"/>
  <rect x="1.2" y="23" width="21.5" height="4.6"/>
  <text x="25" y="7.9" font-size="9.6">1</text>
  <text x="25" y="17.9" font-size="9.6">2</text>
  <text x="25" y="27.9" font-size="9.6">3</text>
</svg>
<div class="lbl" style="left:219px;top:75px;width:60px;font-size:12px">Deflection</div>
<div class="lbl" style="left:219px;top:87px;width:56px;font-size:12px">settings</div>
<div class="a" style="left:270px;top:93px;width:0;height:0;border-left:2.5px solid transparent;border-right:2.5px solid transparent;border-top:3px solid #222"></div>

<svg class="a" style="left:292px;top:42px" width="32" height="32">
  <rect width="32" height="32" rx="4.5" fill="#f26f21"/>
  <path d="M4.8,3.8 H27.3 V12.2 H20.5 V27.2 H12 V12.2 H4.8 Z" fill="none" stroke="#fff" stroke-width="2.2"/>
</svg>
<div class="lbl" style="left:283px;top:75px;width:48px;font-size:12px">Detailed</div>

<svg class="a" style="left:355px;top:41px" width="34" height="34">
  <defs>
    <radialGradient id="bl" cx="0.42" cy="0.3" r="0.75">
      <stop offset="0" stop-color="#8fb8ff"/>
      <stop offset="0.45" stop-color="#3f6fe8"/>
      <stop offset="1" stop-color="#1028b8"/>
    </radialGradient>
  </defs>
  <circle cx="17" cy="17" r="16" fill="url(#bl)" stroke="#1a2fc8" stroke-width="1"/>
  <text x="17" y="26" text-anchor="middle" font-family="Liberation Sans" font-size="24" fill="#000" transform="translate(17,0) scale(0.88,1) translate(-17,0)">?</text>
</svg>
<div class="lbl" style="left:342px;top:75px;width:60px;font-size:12px">Check of</div>
<div class="lbl" style="left:332px;top:87px;width:80px;font-size:12px">combination</div>

<!-- Calculation group -->
<svg class="a" style="left:430px;top:39px" width="36" height="36">
  <defs>
    <linearGradient id="gear" x1="0" y1="0" x2="0" y2="1">
      <stop offset="0" stop-color="#3e5288"/>
      <stop offset="1" stop-color="#8a98b8"/>
    </linearGradient>
  </defs>
  <g transform="translate(18,19)">
    <path id="gp" d="M-3,-16 H3 L4,-11 L8,-9 L12,-12 L16,-8 L13,-4 L14.5,0 L16,3 L12,5 L9,9 L11,13 L6,15 L3,12 H-3 L-6,15 L-11,13 L-9,9 L-12,5 L-16,3 L-14.5,0 L-13,-4 L-16,-8 L-12,-12 L-8,-9 L-4,-11 Z" fill="url(#gear)"/>
    <circle cx="0" cy="-1" r="4.5" fill="#fff"/>
  </g>
  <rect x="4" y="27.5" width="28" height="2.5" fill="#22c040"/>
  <rect x="6" y="25.5" width="4" height="4" fill="#22dd44"/>
  <rect x="21" y="25.5" width="4" height="4" fill="#22dd44"/>
  <rect x="26" y="25.5" width="4" height="4" fill="#22dd44"/>
  <rect x="12.5" y="22.5" width="4" height="7.5" fill="#f07070" stroke="#c04040" stroke-width="0.6"/>
  <rect x="17" y="22.5" width="4" height="7.5" fill="#f07070" stroke="#c04040" stroke-width="0.6"/>
  <path d="M4,31 L2,34.5 H6 Z M32,31 L30,34.5 H34 Z" fill="none" stroke="#3a3af0" stroke-width="1"/>
</svg>
<div class="lbl" style="left:428px;top:75px;width:40px;font-size:12px">All</div>

<!-- View settings group -->
<div class="a" style="left:488px;top:39px;width:56px;height:69px;border:1px solid #5a5a5a;border-radius:3px;background:#f0f0f2;overflow:hidden">
  <div class="a" style="left:0;top:0;width:54px;height:34px;background:linear-gradient(#fbd8a8,#fdd9a6 30%,#fcd29c 56%,#fa9a28 57%,#fcae3c 80%,#ffd44a)"></div>
</div>
<svg class="a" style="left:500px;top:50px" width="34" height="20">
  <defs><linearGradient id="bm" x1="0" y1="0" x2="0" y2="1"><stop offset="0" stop-color="#a8a8a8"/><stop offset="0.5" stop-color="#f0f0f0"/><stop offset="1" stop-color="#a0a0a0"/></linearGradient></defs>
  <rect x="1.5" y="1.5" width="29.5" height="10" fill="url(#bm)" stroke="#505050"/>
  <path d="M4,12.5 L1,18.5 H7 Z M28,12.5 L25,18.5 H31 Z" fill="#6f8cff" stroke="#1010d0" stroke-width="1.2"/>
</svg>
<div class="lbl" style="left:496px;top:75px;width:40px;font-size:12px">View</div>
<div class="lbl" style="left:484px;top:87px;width:58px;font-size:12px">settings</div>
<div class="a" style="left:535px;top:93px;width:0;height:0;border-left:2.5px solid transparent;border-right:2.5px solid transparent;border-top:3px solid #222"></div>

<div class="t" style="left:549px;top:44px;font-size:12px;color:#111">Member</div>
<div class="a" style="left:599px;top:39px;width:60px;height:22px;border:1px solid #a8a8a8;background:#fff"></div>
<div class="t" style="left:610px;top:45px;width:28px;text-align:right;font-size:11.5px;color:#111">2,00</div>
<div class="a" style="left:644px;top:40px;width:14px;height:10px;border:1px solid #b8b8b8;background:linear-gradient(#f8f8f8,#dcdcdc)"></div>
<div class="a" style="left:644px;top:50px;width:14px;height:10px;border:1px solid #b8b8b8;background:linear-gradient(#f8f8f8,#dcdcdc)"></div>
<div class="a" style="left:648px;top:43px;width:0;height:0;border-left:3px solid transparent;border-right:3px solid transparent;border-bottom:3px solid #222"></div>
<div class="a" style="left:648px;top:54px;width:0;height:0;border-left:3px solid transparent;border-right:3px solid transparent;border-top:3px solid #222"></div>


<!-- NAVIGATOR -->
<div id="nav" class="a">
  <div id="navh" class="a"><span class="t" style="left:3px;top:3px;font-size:12px">Navigator</span></div>
</div>
<div class="a" style="left:0;top:0;width:157px;height:1012px;overflow:hidden">
<div class="a" style="left:35px;top:186px;width:1px;height:58px;background:#cfcfcf"></div>
<div class="a" style="left:36px;top:198px;width:10px;height:1px;background:#cfcfcf"></div>
<div class="a" style="left:36px;top:220px;width:10px;height:1px;background:#cfcfcf"></div>
<div class="a" style="left:36px;top:242px;width:10px;height:1px;background:#cfcfcf"></div>
<div class="a" style="left:35px;top:276px;width:1px;height:36px;background:#cfcfcf"></div>
<div class="a" style="left:36px;top:288px;width:10px;height:1px;background:#cfcfcf"></div>
<div class="a" style="left:36px;top:310px;width:10px;height:1px;background:#cfcfcf"></div>
<div class="a" style="left:35px;top:344px;width:1px;height:168px;background:#cfcfcf"></div>
<div class="a" style="left:36px;top:356px;width:10px;height:1px;background:#cfcfcf"></div>
<div class="a" style="left:36px;top:378px;width:10px;height:1px;background:#cfcfcf"></div>
<div class="a" style="left:36px;top:400px;width:10px;height:1px;background:#cfcfcf"></div>
<div class="a" style="left:36px;top:422px;width:10px;height:1px;background:#cfcfcf"></div>
<div class="a" style="left:36px;top:444px;width:10px;height:1px;background:#cfcfcf"></div>
<div class="a" style="left:36px;top:466px;width:10px;height:1px;background:#cfcfcf"></div>
<div class="a" style="left:36px;top:488px;width:10px;height:1px;background:#cfcfcf"></div>
<div class="a" style="left:36px;top:510px;width:10px;height:1px;background:#cfcfcf"></div>
<div class="a" style="left:35px;top:544px;width:1px;height:36px;background:#cfcfcf"></div>
<div class="a" style="left:36px;top:556px;width:10px;height:1px;background:#cfcfcf"></div>
<div class="a" style="left:36px;top:578px;width:10px;height:1px;background:#cfcfcf"></div>
<div class="a" style="left:35px;top:636px;width:1px;height:58px;background:#cfcfcf"></div>
<div class="a" style="left:36px;top:648px;width:10px;height:1px;background:#cfcfcf"></div>
<div class="a" style="left:36px;top:670px;width:10px;height:1px;background:#cfcfcf"></div>
<div class="a" style="left:36px;top:692px;width:10px;height:1px;background:#cfcfcf"></div>
<div class="a" style="left:35px;top:726px;width:1px;height:124px;background:#cfcfcf"></div>
<div class="a" style="left:36px;top:738px;width:10px;height:1px;background:#cfcfcf"></div>
<div class="a" style="left:36px;top:760px;width:10px;height:1px;background:#cfcfcf"></div>
<div class="a" style="left:36px;top:782px;width:10px;height:1px;background:#cfcfcf"></div>
<div class="a" style="left:36px;top:804px;width:10px;height:1px;background:#cfcfcf"></div>
<div class="a" style="left:36px;top:826px;width:10px;height:1px;background:#cfcfcf"></div>
<div class="a" style="left:36px;top:848px;width:10px;height:1px;background:#cfcfcf"></div>
<div class="a" style="left:35px;top:882px;width:1px;height:36px;background:#cfcfcf"></div>
<div class="a" style="left:36px;top:894px;width:10px;height:1px;background:#cfcfcf"></div>
<div class="a" style="left:36px;top:916px;width:10px;height:1px;background:#cfcfcf"></div>
<div class="a ntri" style="top:172px"></div>
<div class="ni" style="left:31px;top:168px">Project</div>
<div class="ni" style="left:51px;top:192px">Project Data</div>
<div class="ni" style="left:51px;top:214px">Cross-Sections</div>
<div class="ni" style="left:51px;top:236px">Materials</div>
<div class="a ntri" style="top:262px"></div>
<div class="ni" style="left:31px;top:258px">Geometry</div>
<div class="ni" style="left:51px;top:282px">Members</div>
<div class="ni" style="left:51px;top:304px">Supports</div>
<div class="a ntri" style="top:330px"></div>
<div class="ni" style="left:31px;top:326px">Loads</div>
<div class="ni" style="left:51px;top:350px">Load Cases</div>
<div class="ni" style="left:51px;top:372px">Point Forces</div>
<div class="ni" style="left:51px;top:394px">Point Moments</div>
<div class="ni" style="left:51px;top:416px">Uniform Loads</div>
<div class="ni" style="left:51px;top:438px">Line Loads</div>
<div class="ni" style="left:51px;top:460px">Settlement</div>
<div class="ni" style="left:51px;top:482px">User-Defined Forces</div>
<div class="ni" style="left:51px;top:504px">Combinations</div>
<div class="a ntri" style="top:530px"></div>
<div class="ni" style="left:31px;top:526px">Construction Stages</div>
<div class="ni" style="left:51px;top:550px">Settings</div>
<div class="ni" style="left:51px;top:572px">Construction Stages</div>
<div class="a ntri" style="top:622px"></div>
<div class="ni" style="left:31px;top:618px">Results</div>
<div class="ni" style="left:51px;top:642px">Reactions</div>
<div class="ni" style="left:51px;top:664px">Deformations</div>
<div class="ni" style="left:51px;top:686px">Internal Forces</div>
<div class="a ntri" style="top:712px"></div>
<div class="ni" style="left:31px;top:708px">Concrete Design 1D</div>
<div class="ni" style="left:51px;top:732px">Data</div>
<div class="ni" style="left:51px;top:754px">Reinforcement</div>
<div class="ni" style="left:51px;top:776px">Deflection</div>
<div class="ni" style="left:51px;top:798px">Redistribution and r</div>
<div class="ni" style="left:51px;top:820px">Lateral stability</div>
<div class="ni" style="left:51px;top:842px">Results</div>
<div class="a ntri" style="top:868px"></div>
<div class="ni" style="left:31px;top:864px">Report</div>
<div class="ni" style="left:51px;top:888px">Standard</div>
<div class="ni" style="left:51px;top:910px">Detailed</div>

</div>


<!-- MAIN VIEW -->
<div class="tabstrip" style="left:164px;top:134px;width:823px;height:23px"></div>
<div class="tab" style="left:164px;top:134px;width:39px;height:23px;line-height:25px;padding-left:5px;font-size:12px">Main</div>
<div class="panel" style="left:164px;top:157px;width:830px;height:341px"></div>
<div class="frame" style="left:169px;top:161px;width:830px;height:332px"></div>
<!-- expand button -->
<div class="a" style="left:173px;top:165px;width:24px;height:24px;border:1px solid #b4b4b4;background:linear-gradient(#e6e6e6,#d2d2d2)"></div>
<svg class="a" style="left:173px;top:165px" width="24" height="24">
  <rect x="1.5" y="1.5" width="21" height="21" fill="none" stroke="#ececec" stroke-width="1"/>
  <g stroke="#6a6a6a" stroke-width="1.3" fill="none">
    <path d="M5.5,5.5 L9,9 M5.5,5.5 H8.5 M5.5,5.5 V8.5"/>
    <path d="M18.5,5.5 L15,9 M18.5,5.5 H15.5 M18.5,5.5 V8.5"/>
    <path d="M5.5,18.5 L9,15 M5.5,18.5 H8.5 M5.5,18.5 V15.5"/>
    <path d="M18.5,18.5 L15,15 M18.5,18.5 H15.5 M18.5,18.5 V15.5"/>
  </g>
</svg>
<svg class="a" style="left:0;top:0" width="987" height="500">
  <g fill="none" shape-rendering="auto">
    <path d="M219,299.5 L577.5,263.5 L935.5,299.5" stroke="#111" stroke-width="1.1"/>
    <path d="M219,313.8 L577.5,277.7 L935.5,313.8" stroke="#111" stroke-width="1.5"/>
    <path d="M219,299 V357" stroke="#666" stroke-width="1.1"/>
    <path d="M577.5,263.5 V357" stroke="#111" stroke-width="1.1"/>
    <path d="M935.5,299 V357" stroke="#333" stroke-width="1.1"/>
    <path d="M219,328.5 H935.5" stroke="#8a8aff" stroke-width="1"/>
    <path d="M219,342.5 H935.5" stroke="#111" stroke-width="1.2"/>
    <path d="M219,348.5 H935.5" stroke="#3a3aff" stroke-width="1"/>
    <path d="M219,351.5 H935.5" stroke="#3a3aff" stroke-width="1"/>
    <path d="M219,357 H935.5" stroke="#5a0c0c" stroke-width="2"/>
    <circle cx="219" cy="357" r="6.6" stroke="#158a15" stroke-width="1.4"/>
    <circle cx="935.5" cy="357" r="6.6" stroke="#158a15" stroke-width="1.4"/>
    <path d="M205.5,357 H212.5 M205.5,349.5 V364.5" stroke="#ff2020" stroke-width="1.3"/>
    <path d="M219,363.5 V370.5 M212,370.5 H226" stroke="#2424ff" stroke-width="1.3"/>
    <path d="M935.5,363.5 V370.5 M928.5,370.5 H942.5" stroke="#2424ff" stroke-width="1.3"/>
    <path d="M219,395.5 H935.5" stroke="#9a9a9a" stroke-width="1"/>
    <path d="M219,388 V401 M577.5,388 V401 M935.5,388 V401" stroke="#b0b0b0" stroke-width="1"/>
    <path d="M215.3,399 L222.7,391.5 M573.8,399 L581.2,391.5 M931.8,399 L939.2,391.5" stroke="#111" stroke-width="1.3"/>
    <path d="M180,482 V454" stroke="#5b5bff" stroke-width="1.6"/>
    <path d="M177,465.5 L180,452.5 L183,465.5" stroke="#2020ff" stroke-width="1.3"/>
    <path d="M180,482 H209" stroke="#ff6060" stroke-width="1.6"/>
    <path d="M196.5,478 L210,482 L196.5,486" stroke="#ff3030" stroke-width="1.3"/>
  </g>
  <g font-family="Liberation Sans">
    <text x="398.5" y="391" font-size="10.5" text-anchor="middle" fill="#222">10,00</text>
    <text x="756.5" y="391" font-size="10.5" text-anchor="middle" fill="#222">10,00</text>
    <text x="219.5" y="423" font-size="14.5" text-anchor="middle" fill="#1f1fd8">1</text>
    <text x="577.5" y="423" font-size="14.5" text-anchor="middle" fill="#1f1fd8">2</text>
    <text x="935.5" y="423" font-size="14.5" text-anchor="middle" fill="#1f1fd8">3</text>
    <text x="185" y="454" font-size="12.5" fill="#1010ff">Z</text>
    <text x="209.5" y="478" font-size="12.5" fill="#ff2020">X</text>
  </g>
</svg>


<!-- DATA VIEW -->
<div class="tabstrip" style="left:164px;top:500px;width:823px;height:23px"></div>
<div class="tab" style="left:164px;top:500px;width:36px;height:23px;line-height:24px;padding-left:5px;font-size:12px">Data</div>
<div class="panel" style="left:164px;top:523px;width:830px;height:513px"></div>
<div class="frame" style="left:169px;top:527px;width:830px;height:504px"></div>
<!--GRID-->
<div class="pg" style="left:175px;top:534px;width:399px;height:451px"></div>
<div class="cat" style="left:176px;top:534px;width:398px"><div class="tri"></div><div class="ct">Ultimate limit state</div></div>
<div class="row" style="left:211px;top:565px;width:139px">Capacity N-M-M</div>
<div class="cb" style="left:360px;top:566px"></div><svg class="a" style="left:360px;top:566px" width="13" height="13"><path d="M3.4,8.2 L5.3,10.2 L8.9,3.8" fill="none" stroke="#000" stroke-width="1.8"/></svg>
<div class="row" style="left:211px;top:587px;width:139px">Shear</div>
<div class="cb" style="left:360px;top:588px"></div><svg class="a" style="left:360px;top:588px" width="13" height="13"><path d="M3.4,8.2 L5.3,10.2 L8.9,3.8" fill="none" stroke="#000" stroke-width="1.8"/></svg>
<div class="row" style="left:211px;top:609px;width:139px">Torsion</div>
<div class="cb" style="left:360px;top:610px"></div><svg class="a" style="left:360px;top:610px" width="13" height="13"><path d="M3.4,8.2 L5.3,10.2 L8.9,3.8" fill="none" stroke="#000" stroke-width="1.8"/></svg>
<div class="row" style="left:211px;top:631px;width:139px">Interaction</div>
<div class="cb" style="left:360px;top:632px"></div><svg class="a" style="left:360px;top:632px" width="13" height="13"><path d="M3.4,8.2 L5.3,10.2 L8.9,3.8" fill="none" stroke="#000" stroke-width="1.8"/></svg>
<div class="gut" style="left:175px;top:561px;height:88px;width:26px"></div>
<div class="cat" style="left:176px;top:649px;width:398px"><div class="tri"></div><div class="ct">Serviceability limit state</div></div>
<div class="row" style="left:211px;top:680px;width:139px">Stress limitation</div>
<div class="cb" style="left:360px;top:681px"></div><svg class="a" style="left:360px;top:681px" width="13" height="13"><path d="M3.4,8.2 L5.3,10.2 L8.9,3.8" fill="none" stroke="#000" stroke-width="1.8"/></svg>
<div class="row" style="left:211px;top:702px;width:139px">Crack width</div>
<div class="cb" style="left:360px;top:703px"></div><svg class="a" style="left:360px;top:703px" width="13" height="13"><path d="M3.4,8.2 L5.3,10.2 L8.9,3.8" fill="none" stroke="#000" stroke-width="1.8"/></svg>
<div class="gut" style="left:175px;top:676px;height:44px;width:26px"></div>
<div class="cat" style="left:176px;top:720px;width:398px"><div class="tri"></div><div class="ct">Detailing</div></div>
<div class="row" style="left:211px;top:751px;width:139px">Detailing</div>
<div class="cb" style="left:360px;top:752px"></div>
<div class="gut" style="left:175px;top:747px;height:22px;width:26px"></div>
<div class="cat" style="left:176px;top:769px;width:398px"><div class="tri"></div><div class="ct">Deflections</div></div>
<div class="row" style="left:211px;top:802px;width:139px">Deflections</div>
<div class="combo" style="left:355px;top:797px;width:216px">Detailed calculation</div>
<div class="gut" style="left:175px;top:796px;height:24px;width:26px"></div>
<div class="cat" style="left:176px;top:820px;width:398px"><div class="tri"></div><div class="ct">Reduction and redistribution</div></div>
<div class="row" style="left:211px;top:851px;width:139px">Redistribution of moments</div>
<div class="cb" style="left:360px;top:852px"></div>
<div class="row" style="left:211px;top:873px;width:139px">Reduction of moments</div>
<div class="cb" style="left:360px;top:874px"></div>
<div class="row" style="left:211px;top:895px;width:139px">Reduction of shear force</div>
<div class="cb" style="left:360px;top:896px"></div>
<div class="row" style="left:211px;top:917px;width:139px">Limited interaction check</div>
<div class="cb" style="left:360px;top:918px"></div>
<div class="gut" style="left:175px;top:847px;height:88px;width:26px"></div>
<div class="cat" style="left:176px;top:935px;width:398px"><div class="tri"></div><div class="ct">Lateral stability</div></div>
<div class="row" style="left:211px;top:966px;width:139px">Lateral stability</div>
<div class="cb" style="left:360px;top:967px"></div>
<div class="gut" style="left:175px;top:962px;height:22px;width:26px"></div>
<div class="pg" style="left:585px;top:534px;width:399px;height:263px"></div>
<div class="cat" style="left:586px;top:534px;width:398px"><div class="tri"></div><div class="ct">Exposure class</div></div>
<div class="row" style="left:621px;top:565px;width:138px">No corrosion (X0)</div>
<div class="cb" style="left:770px;top:566px"></div>
<div class="row" style="left:621px;top:589px;width:138px">Carbonation</div>
<div class="combo" style="left:765px;top:584px;width:216px">XC3 - Moderate humidity</div>
<div class="row" style="left:621px;top:613px;width:138px">Chlorides</div>
<div class="combo" style="left:765px;top:608px;width:216px">XD1 - Moderate humidity</div>
<div class="row" style="left:621px;top:637px;width:138px">Chlorides from sea</div>
<div class="combo" style="left:765px;top:632px;width:216px">No risk of chlorides from sea</div>
<div class="row" style="left:621px;top:661px;width:138px">Freeze/Thaw Attack</div>
<div class="combo" style="left:765px;top:656px;width:216px">No risk of freeze/thaw attack</div>
<div class="row" style="left:621px;top:685px;width:138px">Chemical Attack</div>
<div class="combo" style="left:765px;top:680px;width:216px">No risk of chemical attack</div>
<div class="gut" style="left:585px;top:561px;height:142px;width:26px"></div>
<div class="cat" style="left:586px;top:703px;width:398px"><div class="tri"></div><div class="ct"></div></div>
<div class="row dtxt" style="left:621px;top:732px">Relative humidity [%]</div>
<div class="row dtxt" style="left:768px;top:732px">65</div>
<div class="row dtxt" style="left:621px;top:754px">Member type</div>
<div class="combo dis" style="left:765px;top:749px;width:216px">Beam</div>
<div class="row" style="left:621px;top:778px;width:138px">Structural member import</div>
<div class="combo" style="left:765px;top:773px;width:216px">Major</div>
<div class="gut" style="left:585px;top:730px;height:66px;width:26px"></div>

<!--/GRID-->



<!-- highlights -->
<div class="a" style="left:48px;top:730px;width:106px;height:19px;background:linear-gradient(#f4f4f4,#e4e4e4)"></div>
<div class="ni" style="left:51px;top:732px">Data</div>
<div class="hl" style="left:44px;top:726px;width:114px;height:27px;border-width:3.5px"></div>
<div class="hl" style="left:200px;top:745px;width:373px;height:28px;border-width:4px;border-radius:8px"></div>
<div class="hl" style="left:200px;top:962px;width:373px;height:25px;border-width:4px;border-radius:8px"></div>
<!-- nav header icons -->
<div class="a" style="left:126px;top:145px;width:0;height:0;border-left:4px solid transparent;border-right:4px solid transparent;border-top:4px solid #111"></div>
<svg class="a" style="left:144px;top:142px" width="10" height="12"><path d="M3.5,1.5 H6.5 V6.5 H3.5 Z" fill="#fff" stroke="#111" stroke-width="1.2"/><path d="M1,7 H9" stroke="#111" stroke-width="1.4"/><path d="M5,7 V11" stroke="#111" stroke-width="1.2"/><path d="M5.5,2 V6" stroke="#111" stroke-width="1"/></svg>
<!-- nav scrollbar -->
<div class="a" style="left:6px;top:1014px;width:147px;height:16px;background:#ececec"></div>
<div class="a" style="left:6px;top:1014px;width:16px;height:16px;border:1px solid #a9b8cc;border-radius:2px;background:linear-gradient(#f2f2f2,#d8d8d8)"></div>
<div class="a" style="left:11px;top:1018px;width:0;height:0;border-top:4px solid transparent;border-bottom:4px solid transparent;border-right:4px solid #333"></div>
<div class="a" style="left:23px;top:1014px;width:84px;height:16px;border:1px solid #a6a6a6;border-radius:2px;background:linear-gradient(#f0f0f0,#d4d4d4)"></div>
<div class="a" style="left:137px;top:1014px;width:16px;height:16px;border:1px solid #a9b8cc;border-radius:2px;background:linear-gradient(#f2f2f2,#d8d8d8)"></div>
<div class="a" style="left:143px;top:1018px;width:0;height:0;border-top:4px solid transparent;border-bottom:4px solid transparent;border-left:4px solid #333"></div>
<!-- bottom strip -->
<div class="a" style="left:0;top:1040px;width:987px;height:2px;background:#1a1a1a"></div>
</body></html>
